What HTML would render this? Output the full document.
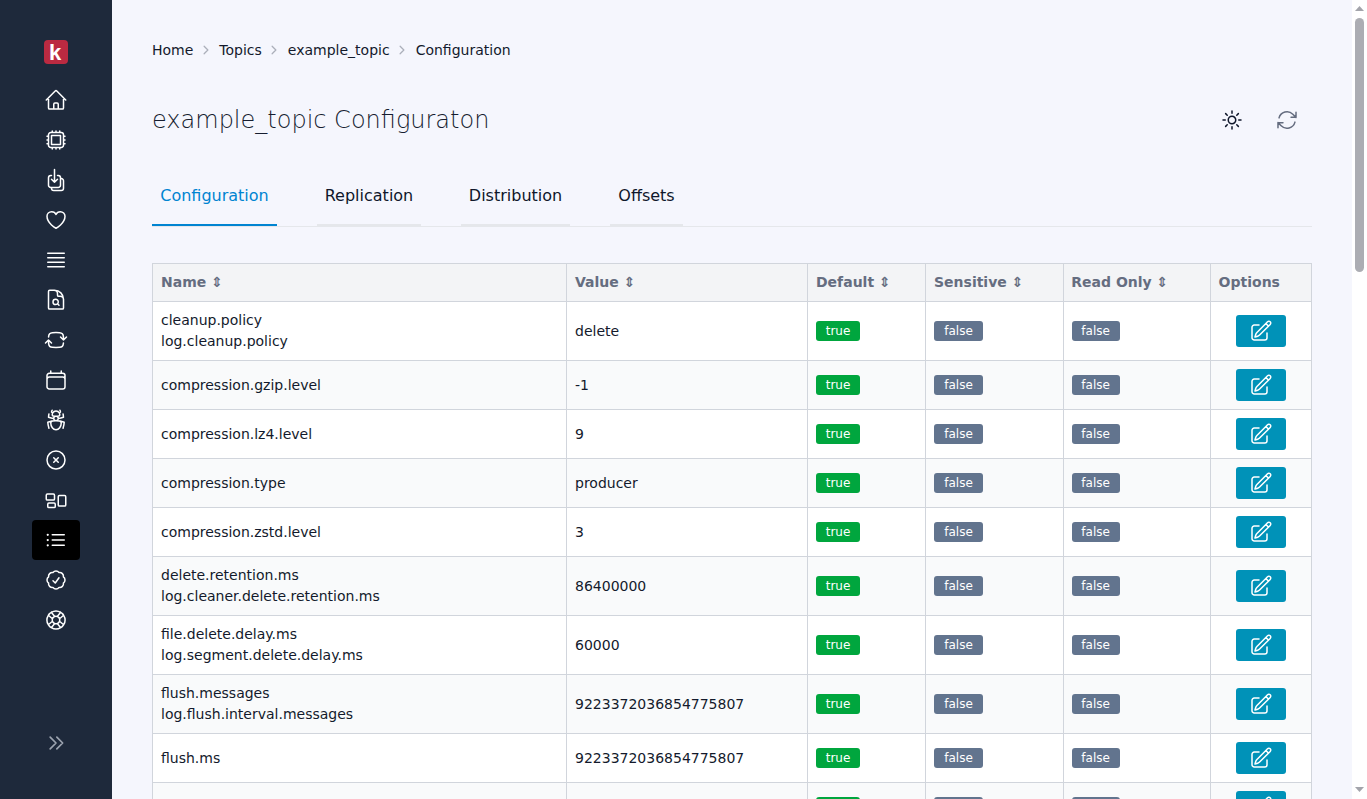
<!DOCTYPE html>
<html lang="en">
<head>
<meta charset="utf-8">
<title>example_topic Configuration</title>
<style>
*{box-sizing:border-box}
html,body{margin:0;padding:0}
body{width:1367px;height:799px;overflow:hidden;background:#f5f6fd;font-family:"DejaVu Sans","Liberation Sans",sans-serif;font-size:14px;color:#131a2c;position:relative}
#side{position:absolute;left:0;top:0;width:112px;height:799px;background:#1e293b}
#side .logo{position:absolute;left:44px;top:40px;width:24px;height:24px;border-radius:4px;background:#bb2a41;color:#fff;font-family:"Liberation Sans",sans-serif;font-weight:bold;font-size:22px;line-height:25px;text-align:center;padding-right:2px}
#side .ic{position:absolute;left:32px;width:48px;height:40px;border-radius:4px;display:block}
#side .ic svg{position:absolute;left:12px;top:8px;width:24px;height:24px;fill:none;stroke:#fff;stroke-width:1.5;stroke-linecap:round;stroke-linejoin:round}
#side .ic.act{background:#000}
#side .ic.dim svg{stroke:#9ca3af;stroke-width:2;width:20px;height:20px;left:14px;top:10px}
#main{position:absolute;left:112px;top:0;width:1240px;height:799px;overflow:hidden}
.bc{position:absolute;left:40px;top:40px;height:21px;font-size:14px;line-height:21px;white-space:nowrap;display:flex;align-items:center}
.bc .sep{width:12px;height:12px;margin:0 7px;position:relative;top:-1px;left:-0.4px;fill:none;stroke:#acb0bb;stroke-width:2.5;stroke-linecap:round;stroke-linejoin:round}
h1{position:absolute;left:40px;top:101px;margin:0;font-weight:200;font-size:24px;line-height:38px;color:#161d30;white-space:nowrap}
.hic{position:absolute;width:24px;height:24px;fill:none;stroke-width:1.5;stroke-linecap:round;stroke-linejoin:round}
.hic.sun{left:1108px;top:108px;stroke:#0f172b}
.hic.ref{left:1163px;top:108px;stroke:#646c7f}
.tabs{position:absolute;left:40px;top:165px;width:1160px;height:62px;border-bottom:1px solid #e5e7eb}
.tab{position:absolute;top:0;height:61px;line-height:62px;font-size:16px;text-align:center;border-bottom:2px solid #e5e7eb;color:#0f172b}
.tab.on{color:#0084d1;border-bottom-color:#0084d1}
table{position:absolute;left:40px;top:263px;border-collapse:collapse;table-layout:fixed;width:1160px;background:#fff}
th,td{border:1px solid #d1d5dc;padding:8px;text-align:left;font-weight:normal;vertical-align:middle;font-size:14px;line-height:21px}
th{background:#f3f4f6;color:#656d80;font-weight:bold}
th i{font-style:normal}
tr.alt td{background:#f9fafb}
.b{display:block;color:#fff;font-size:12px;line-height:20px;height:20px;border-radius:3px;text-align:center}
.t{background:#00a63e;width:44px}.f{background:#62748e;width:49px}.f.r{width:48px;text-align:left;padding-left:9.3px}
.btn{display:block;margin:0 auto;width:50px;height:32px;border-radius:3px;background:#0092b8;position:relative}
.btn svg{position:absolute;left:13px;top:4px;width:24px;height:24px;fill:none;stroke:#fff;stroke-width:1.5;stroke-linecap:round;stroke-linejoin:round}
#sb{position:absolute;left:1352px;top:0;width:15px;height:799px;background:#fff}
#sb .thumb{position:absolute;left:3px;top:18px;width:9px;height:254px;border-radius:4.5px;background:#acadb3}
#sb .up{position:absolute;left:3px;top:6px;width:9px;height:5px;fill:#a3a4ab}
#sb .dn{position:absolute;left:3px;top:787px;width:9px;height:5px;fill:#a3a4ab}
th:nth-child(5){padding-left:7.3px}
th:nth-child(6){padding-left:7.6px}
</style>
</head>
<body>
<div id="side">
<div class="logo">k</div>
<a class="ic" style="top:80px"><svg viewBox="0 0 24 24"><path d="M2.25 12l8.954-8.955c.44-.439 1.152-.439 1.591 0L21.75 12M4.5 9.75v10.125c0 .621.504 1.125 1.125 1.125H9.75v-4.875c0-.621.504-1.125 1.125-1.125h2.25c.621 0 1.125.504 1.125 1.125V21h4.125c.621 0 1.125-.504 1.125-1.125V9.75M8.25 21h8.25"/></svg></a>
<a class="ic" style="top:120px"><svg viewBox="0 0 24 24"><path d="M8.25 3v1.5M4.5 8.25H3m18 0h-1.5M4.5 12H3m18 0h-1.5m-15 3.75H3m18 0h-1.5M8.25 19.5V21M12 3v1.5m0 15V21m3.75-18v1.5m0 15V21m-9-1.5h10.5a2.25 2.25 0 002.25-2.25V6.75a2.25 2.25 0 00-2.25-2.25H6.75A2.25 2.25 0 004.5 6.75v10.5a2.25 2.25 0 002.25 2.25zm.75-12h9v9h-9v-9z"/></svg></a>
<a class="ic" style="top:160px"><svg viewBox="0 0 24 24"><path d="M7.5 7.5h-.75A2.25 2.25 0 004.5 9.75v7.5a2.25 2.25 0 002.25 2.25h7.5a2.25 2.25 0 002.25-2.25v-7.5a2.25 2.25 0 00-2.25-2.25h-.75m-6 3.75l3 3m0 0l3-3m-3 3V1.5m6 9h.75a2.25 2.25 0 012.25 2.25v7.5a2.25 2.25 0 01-2.25 2.25h-7.5a2.25 2.25 0 01-2.25-2.25v-.75"/></svg></a>
<a class="ic" style="top:200px"><svg viewBox="0 0 24 24"><path d="M21 8.25c0-2.485-2.099-4.5-4.688-4.5-1.935 0-3.597 1.126-4.312 2.733-.715-1.607-2.377-2.733-4.313-2.733C5.1 3.75 3 5.765 3 8.25c0 7.22 9 12 9 12s9-4.78 9-12z"/></svg></a>
<a class="ic" style="top:240px"><svg viewBox="0 0 24 24"><path d="M3.75 5.25h16.5m-16.5 4.5h16.5m-16.5 4.5h16.5m-16.5 4.5h16.5"/></svg></a>
<a class="ic" style="top:280px"><svg viewBox="0 0 24 24"><path d="M19.5 14.25v-2.625a3.375 3.375 0 00-3.375-3.375h-1.5A1.125 1.125 0 0113.5 7.125v-1.5a3.375 3.375 0 00-3.375-3.375H8.25m5.231 13.481L15 17.25m-4.5-15H5.625c-.621 0-1.125.504-1.125 1.125v16.5c0 .621.504 1.125 1.125 1.125h12.75c.621 0 1.125-.504 1.125-1.125V11.25a9 9 0 00-9-9zm3.75 11.625a2.625 2.625 0 11-5.25 0 2.625 2.625 0 015.25 0z"/></svg></a>
<a class="ic" style="top:320px"><svg viewBox="0 0 24 24"><path d="M19.5 12c0-1.232-.046-2.453-.138-3.662a4.006 4.006 0 00-3.7-3.7 48.678 48.678 0 00-7.324 0 4.006 4.006 0 00-3.7 3.7c-.017.22-.032.441-.046.662M19.5 12l3-3m-3 3l-3-3m-12 3c0 1.232.046 2.453.138 3.662a4.006 4.006 0 003.7 3.7 48.656 48.656 0 007.324 0 4.006 4.006 0 003.7-3.7c.017-.22.032-.441.046-.662M4.5 12l3 3m-3-3l-3 3"/></svg></a>
<a class="ic" style="top:360px"><svg viewBox="0 0 24 24"><path d="M6.75 3v2.25M17.25 3v2.25M3 18.75V7.5a2.25 2.25 0 012.25-2.25h13.5A2.25 2.25 0 0121 7.5v11.25m-18 0A2.25 2.25 0 005.25 21h13.5A2.25 2.25 0 0021 18.75m-18 0v-7.5A2.25 2.25 0 015.25 9h13.5A2.25 2.25 0 0121 11.25v7.5"/></svg></a>
<a class="ic" style="top:400px"><svg viewBox="0 0 24 24"><path d="M12 12.75c1.148 0 2.278.08 3.383.237 1.037.146 1.866.966 1.866 2.013 0 3.728-2.35 6.75-5.25 6.75S6.75 18.728 6.75 15c0-1.046.83-1.867 1.866-2.013A24.204 24.204 0 0112 12.75zm0 0c2.883 0 5.647.508 8.207 1.44a23.91 23.91 0 01-1.152 6.06M12 12.75c-2.883 0-5.647.508-8.208 1.44.125 2.104.52 4.136 1.153 6.06M12 12.75a2.25 2.25 0 002.248-2.354M12 12.75a2.25 2.25 0 01-2.248-2.354M12 8.25c.995 0 1.971-.08 2.922-.236.403-.066.74-.358.795-.762a3.778 3.778 0 00-.399-2.25M12 8.25c-.995 0-1.97-.08-2.922-.236-.402-.066-.74-.358-.795-.762a3.734 3.734 0 01.4-2.253M12 8.25a2.25 2.25 0 00-2.248 2.146M12 8.25a2.25 2.25 0 012.248 2.146M8.683 5a6.032 6.032 0 01-1.155-1.002c.07-.63.27-1.222.574-1.747m.581 2.749A3.75 3.75 0 0115.318 5m0 0c.427-.283.815-.62 1.155-.999a4.471 4.471 0 00-.575-1.752M4.921 6a24.048 24.048 0 00-.392 3.314c1.668.546 3.416.914 5.223 1.082M19.08 6c.205 1.08.337 2.187.392 3.314a23.882 23.882 0 01-5.223 1.082"/></svg></a>
<a class="ic" style="top:440px"><svg viewBox="0 0 24 24"><path d="M9.75 9.75l4.5 4.5m0-4.5l-4.5 4.5M21 12a9 9 0 11-18 0 9 9 0 0118 0z"/></svg></a>
<a class="ic" style="top:480px"><svg viewBox="0 0 24 24"><path d="M2.25 7.125C2.25 6.504 2.754 6 3.375 6h6c.621 0 1.125.504 1.125 1.125v3.75c0 .621-.504 1.125-1.125 1.125h-6a1.125 1.125 0 01-1.125-1.125v-3.75zM14.25 8.625c0-.621.504-1.125 1.125-1.125h5.25c.621 0 1.125.504 1.125 1.125v8.25c0 .621-.504 1.125-1.125 1.125h-5.25a1.125 1.125 0 01-1.125-1.125v-8.25zM3.75 16.125c0-.621.504-1.125 1.125-1.125h5.25c.621 0 1.125.504 1.125 1.125v2.25c0 .621-.504 1.125-1.125 1.125h-5.25a1.125 1.125 0 01-1.125-1.125v-2.25z"/></svg></a>
<a class="ic act" style="top:520px"><svg viewBox="0 0 24 24"><path d="M8.25 6.75h12M8.25 12h12m-12 5.25h12M3.75 6.75h.007v.008H3.75V6.75zm.375 0a.375.375 0 11-.75 0 .375.375 0 01.75 0zM3.75 12h.007v.008H3.75V12zm.375 0a.375.375 0 11-.75 0 .375.375 0 01.75 0zm-.375 5.25h.007v.008H3.75v-.008zm.375 0a.375.375 0 11-.75 0 .375.375 0 01.75 0z"/></svg></a>
<a class="ic" style="top:560px"><svg viewBox="0 0 24 24"><path d="M9 12.75L11.25 15 15 9.75M21 12c0 1.268-.63 2.39-1.593 3.068a3.745 3.745 0 01-1.043 3.296 3.745 3.745 0 01-3.296 1.043A3.745 3.745 0 0112 21c-1.268 0-2.39-.63-3.068-1.593a3.746 3.746 0 01-3.296-1.043 3.745 3.745 0 01-1.043-3.296A3.745 3.745 0 013 12c0-1.268.63-2.39 1.593-3.068a3.745 3.745 0 011.043-3.296 3.746 3.746 0 013.296-1.043A3.746 3.746 0 0112 3c1.268 0 2.39.63 3.068 1.593a3.746 3.746 0 013.296 1.043 3.746 3.746 0 011.043 3.296A3.745 3.745 0 0121 12z"/></svg></a>
<a class="ic" style="top:600px"><svg viewBox="0 0 24 24"><path d="M16.712 4.33a9.027 9.027 0 011.652 1.306c.51.51.944 1.064 1.306 1.652M16.712 4.33l-3.448 4.138m3.448-4.138a9.014 9.014 0 00-9.424 0M19.67 7.288l-4.138 3.448m4.138-3.448a9.014 9.014 0 010 9.424m-4.138-5.976a3.736 3.736 0 00-.88-1.388 3.737 3.737 0 00-1.388-.88m2.268 2.268a3.765 3.765 0 010 2.528m-2.268-4.796a3.765 3.765 0 00-2.528 0m4.796 4.796c-.181.506-.475.982-.88 1.388a3.736 3.736 0 01-1.388.88m2.268-2.268l4.138 3.448m0 0a9.027 9.027 0 01-1.306 1.652c-.51.51-1.064.944-1.652 1.306m0 0l-3.448-4.138m3.448 4.138a9.014 9.014 0 01-9.424 0m5.976-4.138a3.765 3.765 0 01-2.528 0m0 0a3.736 3.736 0 01-1.388-.88 3.737 3.737 0 01-.88-1.388m2.268 2.268L7.288 19.67m0 0a9.024 9.024 0 01-1.652-1.306 9.027 9.027 0 01-1.306-1.652m0 0l4.138-3.448M4.33 16.712a9.014 9.014 0 010-9.424m4.138 5.976a3.765 3.765 0 010-2.528m0 0c.181-.506.475-.982.88-1.388a3.736 3.736 0 011.388-.88m-2.268 2.268L4.33 7.288m6.406 1.18L7.288 4.33m0 0a9.024 9.024 0 00-1.652 1.306A9.025 9.025 0 004.33 7.288"/></svg></a>
<a class="ic dim" style="top:723px"><svg viewBox="0 0 24 24"><path d="M13 5l7 7-7 7M5 5l7 7-7 7"/></svg></a>
</div>
<div id="main">
<div class="bc"><span>Home</span><svg class="sep" viewBox="0 0 24 24"><path d="M8.25 4.5l7.5 7.5-7.5 7.5"/></svg><span>Topics</span><svg class="sep" viewBox="0 0 24 24"><path d="M8.25 4.5l7.5 7.5-7.5 7.5"/></svg><span>example_topic</span><svg class="sep" viewBox="0 0 24 24"><path d="M8.25 4.5l7.5 7.5-7.5 7.5"/></svg><span>Configuration</span></div>
<h1>example_topic Configuraton</h1>
<svg class="hic sun" viewBox="0 0 24 24"><path d="M12 3v2.25m6.364.386l-1.591 1.591M21 12h-2.25m-.386 6.364l-1.591-1.591M12 18.75V21m-4.773-4.227l-1.591 1.591M5.25 12H3m4.227-4.773L5.636 5.636M15.75 12a3.75 3.75 0 11-7.5 0 3.75 3.75 0 017.5 0z"/></svg>
<svg class="hic ref" viewBox="0 0 24 24"><path d="M16.023 9.348h4.992v-.001M2.985 19.644v-4.992m0 0h4.992m-4.993 0l3.181 3.183a8.25 8.25 0 0013.803-3.7M4.031 9.865a8.25 8.25 0 0113.803-3.7l3.181 3.182m0-4.991v4.99"/></svg>
<div class="tabs">
<div class="tab on" style="left:0;width:125px">Configuration</div>
<div class="tab" style="left:165px;width:104px">Replication</div>
<div class="tab" style="left:309px;width:109px">Distribution</div>
<div class="tab" style="left:458px;width:73px">Offsets</div>
</div>
<table>
<colgroup><col style="width:414px"><col style="width:241px"><col style="width:118px"><col style="width:138px"><col style="width:147px"><col style="width:101px"></colgroup>
<thead><tr><th>Name <i>⇕</i></th><th>Value <i>⇕</i></th><th>Default <i>⇕</i></th><th>Sensitive <i>⇕</i></th><th>Read Only <i>⇕</i></th><th>Options</th></tr></thead>
<tbody>
<tr><td>cleanup.policy<br>log.cleanup.policy</td><td>delete</td><td><span class="b t">true</span></td><td><span class="b f">false</span></td><td><span class="b f r">false</span></td><td><a class="btn"><svg viewBox="0 0 24 24"><path d="M16.862 4.487l1.687-1.688a1.875 1.875 0 112.652 2.652L10.582 16.07a4.5 4.5 0 01-1.897 1.13L6 18l.8-2.685a4.5 4.5 0 011.13-1.897l8.932-8.931zm0 0L19.5 7.125M18 14v4.75A2.25 2.25 0 0115.75 21H5.25A2.25 2.25 0 013 18.75V8.25A2.25 2.25 0 015.25 6H10"/></svg></a></td></tr>
<tr class="alt"><td>compression.gzip.level</td><td>-1</td><td><span class="b t">true</span></td><td><span class="b f">false</span></td><td><span class="b f r">false</span></td><td><a class="btn"><svg viewBox="0 0 24 24"><path d="M16.862 4.487l1.687-1.688a1.875 1.875 0 112.652 2.652L10.582 16.07a4.5 4.5 0 01-1.897 1.13L6 18l.8-2.685a4.5 4.5 0 011.13-1.897l8.932-8.931zm0 0L19.5 7.125M18 14v4.75A2.25 2.25 0 0115.75 21H5.25A2.25 2.25 0 013 18.75V8.25A2.25 2.25 0 015.25 6H10"/></svg></a></td></tr>
<tr><td>compression.lz4.level</td><td>9</td><td><span class="b t">true</span></td><td><span class="b f">false</span></td><td><span class="b f r">false</span></td><td><a class="btn"><svg viewBox="0 0 24 24"><path d="M16.862 4.487l1.687-1.688a1.875 1.875 0 112.652 2.652L10.582 16.07a4.5 4.5 0 01-1.897 1.13L6 18l.8-2.685a4.5 4.5 0 011.13-1.897l8.932-8.931zm0 0L19.5 7.125M18 14v4.75A2.25 2.25 0 0115.75 21H5.25A2.25 2.25 0 013 18.75V8.25A2.25 2.25 0 015.25 6H10"/></svg></a></td></tr>
<tr class="alt"><td>compression.type</td><td>producer</td><td><span class="b t">true</span></td><td><span class="b f">false</span></td><td><span class="b f r">false</span></td><td><a class="btn"><svg viewBox="0 0 24 24"><path d="M16.862 4.487l1.687-1.688a1.875 1.875 0 112.652 2.652L10.582 16.07a4.5 4.5 0 01-1.897 1.13L6 18l.8-2.685a4.5 4.5 0 011.13-1.897l8.932-8.931zm0 0L19.5 7.125M18 14v4.75A2.25 2.25 0 0115.75 21H5.25A2.25 2.25 0 013 18.75V8.25A2.25 2.25 0 015.25 6H10"/></svg></a></td></tr>
<tr><td>compression.zstd.level</td><td>3</td><td><span class="b t">true</span></td><td><span class="b f">false</span></td><td><span class="b f r">false</span></td><td><a class="btn"><svg viewBox="0 0 24 24"><path d="M16.862 4.487l1.687-1.688a1.875 1.875 0 112.652 2.652L10.582 16.07a4.5 4.5 0 01-1.897 1.13L6 18l.8-2.685a4.5 4.5 0 011.13-1.897l8.932-8.931zm0 0L19.5 7.125M18 14v4.75A2.25 2.25 0 0115.75 21H5.25A2.25 2.25 0 013 18.75V8.25A2.25 2.25 0 015.25 6H10"/></svg></a></td></tr>
<tr class="alt"><td>delete.retention.ms<br>log.cleaner.delete.retention.ms</td><td>86400000</td><td><span class="b t">true</span></td><td><span class="b f">false</span></td><td><span class="b f r">false</span></td><td><a class="btn"><svg viewBox="0 0 24 24"><path d="M16.862 4.487l1.687-1.688a1.875 1.875 0 112.652 2.652L10.582 16.07a4.5 4.5 0 01-1.897 1.13L6 18l.8-2.685a4.5 4.5 0 011.13-1.897l8.932-8.931zm0 0L19.5 7.125M18 14v4.75A2.25 2.25 0 0115.75 21H5.25A2.25 2.25 0 013 18.75V8.25A2.25 2.25 0 015.25 6H10"/></svg></a></td></tr>
<tr><td>file.delete.delay.ms<br>log.segment.delete.delay.ms</td><td>60000</td><td><span class="b t">true</span></td><td><span class="b f">false</span></td><td><span class="b f r">false</span></td><td><a class="btn"><svg viewBox="0 0 24 24"><path d="M16.862 4.487l1.687-1.688a1.875 1.875 0 112.652 2.652L10.582 16.07a4.5 4.5 0 01-1.897 1.13L6 18l.8-2.685a4.5 4.5 0 011.13-1.897l8.932-8.931zm0 0L19.5 7.125M18 14v4.75A2.25 2.25 0 0115.75 21H5.25A2.25 2.25 0 013 18.75V8.25A2.25 2.25 0 015.25 6H10"/></svg></a></td></tr>
<tr class="alt"><td>flush.messages<br>log.flush.interval.messages</td><td>9223372036854775807</td><td><span class="b t">true</span></td><td><span class="b f">false</span></td><td><span class="b f r">false</span></td><td><a class="btn"><svg viewBox="0 0 24 24"><path d="M16.862 4.487l1.687-1.688a1.875 1.875 0 112.652 2.652L10.582 16.07a4.5 4.5 0 01-1.897 1.13L6 18l.8-2.685a4.5 4.5 0 011.13-1.897l8.932-8.931zm0 0L19.5 7.125M18 14v4.75A2.25 2.25 0 0115.75 21H5.25A2.25 2.25 0 013 18.75V8.25A2.25 2.25 0 015.25 6H10"/></svg></a></td></tr>
<tr><td>flush.ms</td><td>9223372036854775807</td><td><span class="b t">true</span></td><td><span class="b f">false</span></td><td><span class="b f r">false</span></td><td><a class="btn"><svg viewBox="0 0 24 24"><path d="M16.862 4.487l1.687-1.688a1.875 1.875 0 112.652 2.652L10.582 16.07a4.5 4.5 0 01-1.897 1.13L6 18l.8-2.685a4.5 4.5 0 011.13-1.897l8.932-8.931zm0 0L19.5 7.125M18 14v4.75A2.25 2.25 0 0115.75 21H5.25A2.25 2.25 0 013 18.75V8.25A2.25 2.25 0 015.25 6H10"/></svg></a></td></tr>
<tr class="alt"><td></td><td></td><td><span class="b t">true</span></td><td><span class="b f">false</span></td><td><span class="b f r">false</span></td><td><a class="btn"><svg viewBox="0 0 24 24"><path d="M16.862 4.487l1.687-1.688a1.875 1.875 0 112.652 2.652L10.582 16.07a4.5 4.5 0 01-1.897 1.13L6 18l.8-2.685a4.5 4.5 0 011.13-1.897l8.932-8.931zm0 0L19.5 7.125M18 14v4.75A2.25 2.25 0 0115.75 21H5.25A2.25 2.25 0 013 18.75V8.25A2.25 2.25 0 015.25 6H10"/></svg></a></td></tr>
</tbody>
</table>
</div>
<div id="sb"><svg class="up" viewBox="0 0 9 5"><polygon points="0,5 4.5,0 9,5"/></svg><div class="thumb"></div><svg class="dn" viewBox="0 0 9 5"><polygon points="0,0 9,0 4.5,5"/></svg></div>
</body>
</html>
